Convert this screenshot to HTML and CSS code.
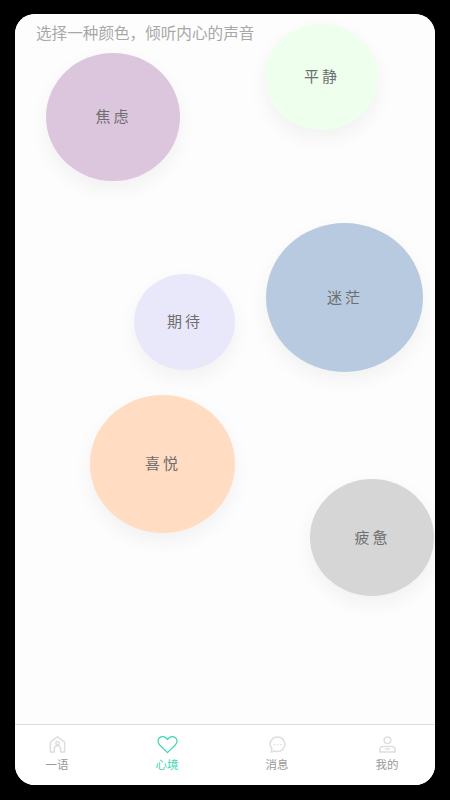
FILE: index.html
```html
<!DOCTYPE html>
<html lang="zh">
<head>
    <meta charset="UTF-8">
    <meta name="viewport" content="width=device-width, initial-scale=1.0">
    <title>心境</title>
    <link rel="stylesheet" href="styles.css">
</head>
<body>
    <div class="phone">
        <main class="canvas">
            <p class="hint">选择一种颜色，倾听内心的声音</p>
            <div class="bubble bubble-calm">平静</div>
            <div class="bubble bubble-anxious">焦虑</div>
            <div class="bubble bubble-lost">迷茫</div>
            <div class="bubble bubble-hope">期待</div>
            <div class="bubble bubble-joy">喜悦</div>
            <div class="bubble bubble-tired">疲惫</div>
        </main>
        <nav class="tabbar">
            <div class="tab">
                <svg class="tab-icon" viewBox="0 0 20 20" fill="none" stroke="#dedede" stroke-width="1.6" stroke-linejoin="round">
                    <path d="M2.5 18V7.5L10 2l7.5 5.5V18h-4.2v-3.500a3.300 3.300 0 0 0-6.600 0V18z"/>
                    <circle cx="10" cy="8.6" r="1.7"/>
                </svg>
                <span>一语</span>
            </div>
            <div class="tab tab-active">
                <svg class="tab-icon tab-icon-heart" viewBox="0 0 22 20" fill="none" stroke="#3ed6b4" stroke-width="1.3" stroke-linejoin="round">
                    <path d="M11 18.6 2.6 10.2C.4 8 .6 4.7 2.6 2.9c2.2-1.9 5.4-1.6 7.2.5l1.2 1.4 1.2-1.4c1.8-2.1 5-2.4 7.2-.5 2 1.8 2.2 5.1 0 7.3z"/>
                </svg>
                <span>心境</span>
            </div>
            <div class="tab">
                <svg class="tab-icon" viewBox="0 0 20 20" fill="none" stroke="#dedede" stroke-width="1.6" stroke-linejoin="round">
                    <path d="M10 2.200c4.400 0 7.800 3.300 7.800 7.600s-3.400 7.600-7.800 7.600c-1.100 0-2.100-.2-3-.6L3.300 18l.8-3.400c-1.200-1.300-1.900-3-1.900-4.800 0-4.300 3.400-7.600 7.800-7.600z"/>
                    <path d="M6.700 10h.1M10 10h.1M13.300 10h.1" stroke-width="1.800" stroke-linecap="round"/>
                </svg>
                <span>消息</span>
            </div>
            <div class="tab">
                <svg class="tab-icon" viewBox="0 0 20 20" fill="none" stroke="#dedede" stroke-width="1.6" stroke-linejoin="round">
                    <circle cx="10" cy="5.500" r="3.500"/>
                    <path d="M2 18v-2.500c0-2 1.500-3.300 3.500-3.300h9c2 0 3.500 1.300 3.500 3.300V18z"/>
                    <path d="M8 14.800h4" stroke-linecap="round"/>
                </svg>
                <span>我的</span>
            </div>
        </nav>
    </div>
</body>
</html>
```

FILE: styles.css
```css
html, body {
    height: 100%;
}
body {
    margin: 0;
    background-color: #000;
    font-family: "Noto Sans CJK SC", "Liberation Sans", sans-serif;
    padding: 14px 15px 15px;
    box-sizing: border-box;
}
.phone {
    height: 771px;
    display: flex;
    flex-direction: column;
    background-color: #fff;
    border-radius: 20px;
    overflow: hidden;
}
.canvas {
    position: relative;
    flex: 1;
    background-color: #fdfdfd;
}
.hint {
    margin: 0;
    padding: 7px 0 0 21px;
    font-size: 15.6px;
    line-height: 23px;
    color: #a8a8a8;
}
.bubble {
    position: absolute;
    display: flex;
    justify-content: center;
    align-items: center;
    padding: 0 0 3px 1px;
    box-sizing: border-box;
    border-radius: 50%;
    font-size: 15px;
    letter-spacing: 3px;
    color: #6e6e6e;
    box-shadow: 0 8px 20px rgba(0, 0, 0, 0.05);
}
.bubble-calm {
    left: 250px;
    top: 10px;
    width: 113px;
    height: 106px;
    background-color: #efffee;
}
.bubble-anxious {
    left: 31px;
    top: 39px;
    width: 134px;
    height: 128px;
    background-color: #dcc6de;
}
.bubble-lost {
    left: 251px;
    top: 209px;
    width: 157px;
    height: 149px;
    background-color: #b8cae0;
}
.bubble-hope {
    left: 119px;
    top: 260px;
    width: 101px;
    height: 96px;
    background-color: #e9e8fb;
}
.bubble-joy {
    left: 75px;
    top: 381px;
    width: 145px;
    height: 138px;
    background-color: #ffdcc2;
}
.bubble-tired {
    left: 295px;
    top: 465px;
    width: 124px;
    height: 117px;
    background-color: #d6d6d6;
}
.tabbar {
    display: flex;
    justify-content: space-between;
    height: 60px;
    padding: 0 33px 0 27px;
    border-top: 1px solid #dcdcdc;
    background-color: #fff;
}
.tab {
    width: 30px;
    display: flex;
    flex-direction: column;
    align-items: center;
    padding-top: 10px;
    box-sizing: border-box;
    font-size: 11.5px;
    line-height: 16px;
    color: #999;
    white-space: nowrap;
}
.tab-active {
    color: #3ed6b4;
}
.tab-icon {
    width: 19px;
    height: 19px;
    margin-bottom: 2px;
}
.tab-icon-heart {
    width: 21px;
}
```
